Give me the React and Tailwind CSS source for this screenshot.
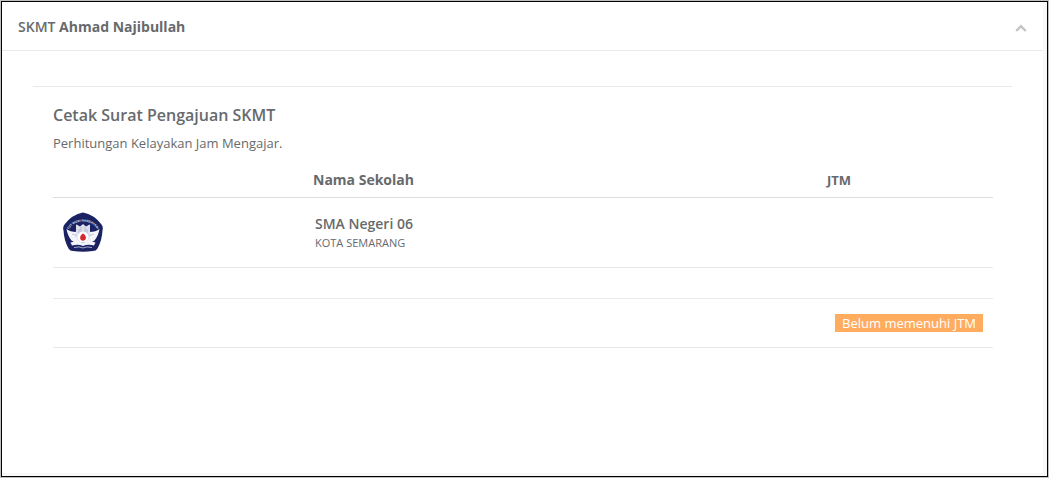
import React, { useState } from 'react';

const schools = [
  { id: 1, name: 'SMA Negeri 06', city: 'KOTA SEMARANG', jtm: '' },
];

const SchoolLogo = () => (
  <svg className="block h-10 w-10" viewBox="0 0 80 80" role="img" aria-label="Tut Wuri Handayani">
    <path
      d="M40 1 Q62 5 77 25 Q81 30 79 37 Q78 57 69 73 Q66 78 60 78 Q40 81 20 78 Q14 78 11 73 Q2 57 1 37 Q-1 30 3 25 Q18 5 40 1 Z"
      fill="#1b2263"
    />
    <path id="logo-arc" d="M11 36 Q19 20 40 19 Q61 20 69 36" fill="none" />
    <text fill="#dfe2ef" fontFamily="Open Sans, sans-serif" fontWeight="700" fontSize="6">
      <textPath href="#logo-arc" startOffset="50%" textAnchor="middle">TUT WURI HANDAYANI</textPath>
    </text>
    {/* wings */}
    <path d="M7 34 Q14 40 27 40 L26 25 L34 31 L35 60 Q24 63 17 57 Q9 47 7 34 Z" fill="#f4f5fa" />
    <path d="M73 34 Q66 40 53 40 L54 25 L46 31 L45 60 Q56 63 63 57 Q71 47 73 34 Z" fill="#f4f5fa" />
    <path d="M27 25 L34 29 L40 24 L46 29 L53 25 L55 49 L47 61 L33 61 L25 49 Z" fill="#dde0ec" />
    <path d="M32 34 V48 M36 30 V40 M44 30 V40 M48 34 V48 M18 44 L27 47 M62 44 L53 47" stroke="#9a9fc2" strokeWidth="1.2" />
    <circle cx="40" cy="50" r="11" fill="#fff" />
    <path d="M40 43 Q48 48 45 55 Q40 60 35 55 Q32 48 40 43 Z" fill="#d7262f" />
    {/* open book */}
    <path d="M15 61 Q29 57 40 62 Q51 57 65 61 L62 67 Q49 64 40 68 Q31 64 18 67 Z" fill="#f4f5fa" />
    <path d="M22 71 Q33 68 40 72 Q47 68 58 71" stroke="#a9aecb" strokeWidth="2" fill="none" />
  </svg>
);

const App = () => {
  const [open, setOpen] = useState(true);

  return (
    <div className="flex min-h-screen border border-[#c0c0c0] bg-[#f8f8f8] font-['Open_Sans',sans-serif] text-[13px] leading-5 text-[#676a6c]">
      <div className="flex-1 border border-black pr-1 pb-[3px]">
        <div className="min-h-full bg-white">
          <div className="flex items-center justify-between border-b border-[#e7eaec] pt-[15px] pr-4 pb-[13px] pl-4">
            <h5 className="text-sm font-semibold">
              SKMT <strong className="font-bold">Ahmad Najibullah</strong>
            </h5>
            <button
              type="button"
              aria-label="Toggle panel"
              aria-expanded={open}
              onClick={() => setOpen(!open)}
              className="cursor-pointer pt-0.5 text-[#c4c4c4]"
            >
              <svg className={open ? 'h-3 w-3' : 'h-3 w-3 rotate-180'} viewBox="0 0 12 12" fill="none" stroke="currentColor" strokeWidth="2.4">
                <path d="M1.2 9 L6 4.2 L10.8 9" />
              </svg>
            </button>
          </div>

          {open && (
            <div className="pt-[35px] pr-[31px] pb-5 pl-[31px]">
              <div className="border-t border-[#e7eaec] pt-4 pr-[19px] pl-5">
                <h2 className="text-base leading-6 font-semibold">Cetak Surat Pengajuan SKMT</h2>
                <p className="mt-1.5">Perhitungan Kelayakan Jam Mengajar.</p>

                <table className="mt-2 w-full table-fixed border-collapse text-left">
                  <thead>
                    <tr className="h-9 border-b border-[#dddddd]">
                      <th className="w-[250px] px-2.5" aria-label="Logo" />
                      <th className="px-2.5 pt-0.5 text-sm font-bold">Nama Sekolah</th>
                      <th className="w-[176px] px-2.5 pt-0.5 font-bold">JTM</th>
                    </tr>
                  </thead>
                  <tbody>
                    {schools.map((school) => (
                      <tr key={school.id} className="h-[70px] border-b border-[#e7eaec]">
                        <td className="px-2.5"><SchoolLogo /></td>
                        <td className="px-3 pt-0.5">
                          <div className="text-sm leading-5 font-semibold">{school.name}</div>
                          <div className="text-[11px] leading-[18px]">{school.city}</div>
                        </td>
                        <td className="px-2.5">{school.jtm}</td>
                      </tr>
                    ))}
                    <tr className="h-[31px] border-b border-[#e7eaec]">
                      <td colSpan={3} />
                    </tr>
                    <tr className="h-[49px] border-b border-[#e7eaec]">
                      <td colSpan={3} className="px-2.5 text-right">
                        <span className="inline-block bg-[#ffac5f] px-[7px] leading-[18px] font-medium text-white">
                          Belum memenuhi JTM
                        </span>
                      </td>
                    </tr>
                  </tbody>
                </table>
              </div>
            </div>
          )}
        </div>
      </div>
    </div>
  );
};

export default App;
